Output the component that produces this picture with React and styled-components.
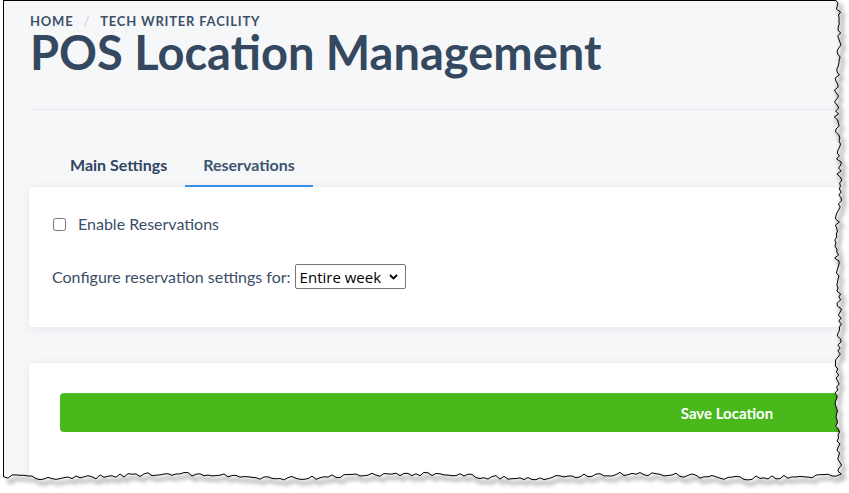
import React from "react";
import styled, { createGlobalStyle } from "styled-components";

const GlobalStyle = createGlobalStyle`
  html, body {
    margin: 0;
    padding: 0;
    background: #ffffff;
    overflow: hidden;
  }
  body {
    font-family: "Lato", "Noto Sans", sans-serif;
  }
`;

const Frame = styled.div`
  position: relative;
  width: 849px;
  height: 493px;
  overflow: hidden;
  background: #ffffff;
`;

const Page = styled.div`
  margin-left: 3px;
  width: 1452px;
  height: 493px;
  box-sizing: border-box;
  border-left: 1px solid #000;
  border-top: 1px solid #000;
  background: #f6f7f9;
  padding: 0 30px 0 25px;
`;

const Header = styled.header`
  padding: 13px 0 0 1px;
`;

const Crumbs = styled.nav`
  display: flex;
  align-items: center;
  gap: 10px;
  font-size: 13px;
  line-height: 14px;
  font-weight: 700;
  letter-spacing: 0.8px;
  text-transform: uppercase;
  color: #3e5068;
`;

const CrumbSep = styled.span`
  color: #c9ced6;
  font-weight: 400;
`;

const Title = styled.h1`
  margin: 1px 0 0;
  font-size: 47px;
  line-height: 47px;
  font-weight: 700;
  color: #34485f;
`;

const Rule = styled.hr`
  margin: 33px 0 0;
  border: 0;
  border-top: 1px solid #e7e9ec;
`;

const TabList = styled.div`
  display: flex;
  padding-left: 23px;
  margin-top: 33px;
`;

const Tab = styled.div`
  padding: 12px 18px 10px;
  font-size: 16px;
  line-height: 20px;
  font-weight: 700;
  color: ${(p) => (p.$active ? "#3d5570" : "#2f4560")};
  border-bottom: 2px solid ${(p) => (p.$active ? "#3a8ee6" : "transparent")};
`;

const Card = styled.section`
  background: #ffffff;
  border-radius: 4px;
  box-shadow: 0 1px 10px rgba(20, 30, 50, 0.08);
  padding: ${(p) => p.$pad};
  margin-top: ${(p) => p.$mt || "0"};
`;

const CheckRow = styled.label`
  display: flex;
  align-items: center;
  gap: 12px;
  font-size: 16px;
  line-height: 20px;
  color: #3b4e66;
`;

const Check = styled.input`
  width: 13px;
  height: 13px;
  margin: 0 0 0 1px;
`;

const SelectRow = styled.div`
  display: flex;
  align-items: center;
  gap: 4px;
  margin-top: 30px;
  font-size: 16px;
  color: #3b4e66;
`;

const SelectBox = styled.div`
  display: inline-flex;
  align-items: center;
  height: 25px;
  box-sizing: border-box;
  border: 1px solid #767676;
  border-radius: 2px;
  padding: 0 7px 0 4px;
  gap: 7px;
  background: #fff;
`;

const Select = styled.select`
  appearance: none;
  border: 0;
  outline: 0;
  padding: 0;
  background: transparent;
  font-family: "Open Sans", sans-serif;
  font-size: 15px;
  color: #000;
`;

const SaveButton = styled.button`
  display: block;
  width: 100%;
  height: 39px;
  border: 0;
  border-top: 1px solid #5cc230;
  border-radius: 4px;
  background: #48b81a;
  color: #ffffff;
  font-family: "Lato", sans-serif;
  font-size: 15px;
  font-weight: 700;
`;

const Torn = styled.svg`
  position: absolute;
  inset: 0;
  pointer-events: none;
`;

function rng(seed) {
  let s = seed;
  return () => {
    s = (s * 16807) % 2147483647;
    return (s - 1) / 2147483646;
  };
}

function tornPath() {
  const r = rng(11);
  const pts = [];
  for (let y = 0; y <= 474; y += 3) {
    pts.push([838 + Math.sin(y / 23) * 1.5 + (r() - 0.5) * 5, y]);
  }
  for (let x = 836; x >= 3; x -= 4) {
    pts.push([x, 476 + Math.sin(x / 37) * 2 + (r() - 0.5) * 4]);
  }
  return pts;
}

function TornEdge() {
  const pts = tornPath();
  const line = pts.map((p, i) => `${i ? "L" : "M"}${p[0].toFixed(1)},${p[1].toFixed(1)}`).join(" ");
  const fill = `${line} L0,478 L0,493 L849,493 L849,0 Z`;
  return (
    <Torn width="849" height="493" viewBox="0 0 849 493">
      <defs>
        <filter id="soft" x="-10%" y="-10%" width="120%" height="120%">
          <feGaussianBlur stdDeviation="2" />
        </filter>
      </defs>
      <path d={fill} fill="#ffffff" />
      <path d={line} fill="none" stroke="rgba(0,0,0,0.35)" strokeWidth="3" filter="url(#soft)" transform="translate(3,4)" />
      <path d={line} fill="none" stroke="#000" strokeWidth="1" />
    </Torn>
  );
}

export default function App() {
  return (
    <>
      <GlobalStyle />
      <Frame>
        <Page>
          <Header>
            <Crumbs>
              <span>Home</span>
              <CrumbSep>/</CrumbSep>
              <span>Tech Writer Facility</span>
            </Crumbs>
            <Title>POS Location Management</Title>
            <Rule />
          </Header>
          <TabList>
            <Tab>Main Settings</Tab>
            <Tab $active>Reservations</Tab>
          </TabList>
          <Card $pad="27px 23px 38px">
            <CheckRow>
              <Check type="checkbox" />
              Enable Reservations
            </CheckRow>
            <SelectRow>
              Configure reservation settings for:
              <SelectBox>
                <Select defaultValue="week">
                  <option value="week">Entire week</option>
                </Select>
                <svg width="9" height="6" viewBox="0 0 9 6">
                  <path d="M1 1 L4.5 4.5 L8 1" fill="none" stroke="#000" strokeWidth="1.8" />
                </svg>
              </SelectBox>
            </SelectRow>
          </Card>
          <Card $pad="30px 31px 80px" $mt="36px">
            <SaveButton>Save Location</SaveButton>
          </Card>
        </Page>
        <TornEdge />
      </Frame>
    </>
  );
}
